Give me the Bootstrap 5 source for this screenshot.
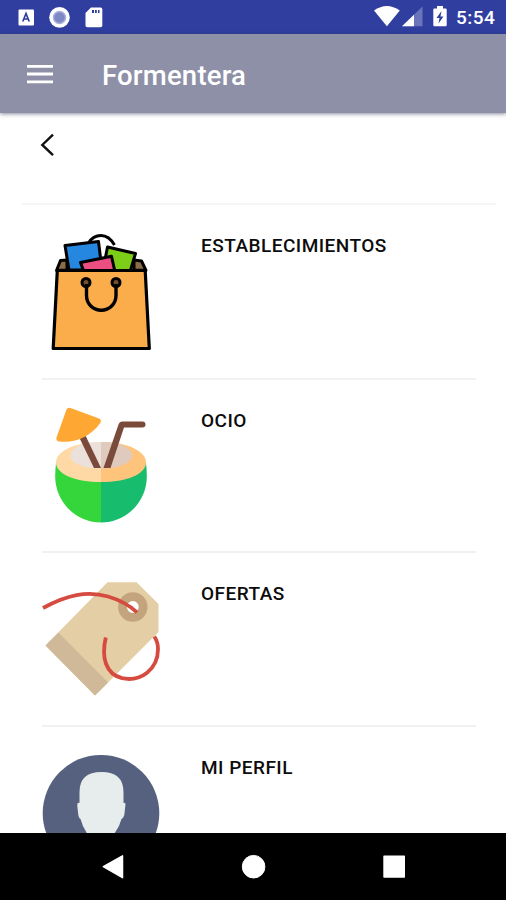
<!DOCTYPE html>
<html lang="es">
<head>
<meta charset="utf-8">
<meta name="viewport" content="width=device-width, initial-scale=1">
<title>Formentera</title>
<link href="https://cdn.jsdelivr.net/npm/bootstrap@5.3.0/dist/css/bootstrap.min.css" rel="stylesheet">
<style>
body{font-family:Roboto,sans-serif;color:#111}
svg{display:block;flex:none}
.screen{height:900px;width:506px}
.status-bar{height:34px;background:#303f9f;padding:0 10px 0 18px}
.clock{font-size:19px;font-weight:500;line-height:34px;padding-top:2px;width:40px;letter-spacing:.5px}
.app-bar{height:79px;background:#8e90a7;box-shadow:0 1px 4px rgba(40,42,80,.55);padding:0 27px;z-index:1}
.app-title{font-size:27.500px;font-weight:500;line-height:32px;margin:4px 0 0 49px;letter-spacing:.2px}
.back-row{height:92px;margin:0 10px 0 22px;padding:20px 0 0 18px;border-bottom:2px solid #f5f5f5}
.menu-list{margin:0 30px 0 42px}
.menu-entry{height:173px;border-bottom:2px solid #f1f1f1}
.menu-entry.first{height:175px}
.menu-entry.third{height:174px}
.menu-entry svg{margin-left:-2px}
.entry-label{font-size:19px;font-weight:500;line-height:24px;margin:29px 0 0 39px;color:#0c0c0c;letter-spacing:.48px}
.nav-keys{height:67px;background:#000;z-index:1}
</style>
</head>
<body class="bg-white">
<div class="screen d-flex flex-column overflow-hidden bg-white">
  <div class="status-bar d-flex align-items-center justify-content-between text-white flex-shrink-0">
    <svg width="90" height="34" viewBox="18 0 90 34">
      <rect x="18.500" y="9.500" width="15.500" height="16" rx="1" fill="#fff"/>
      <path d="M22.800 21.500L26 13.500l3.200 8M24 19h4" fill="none" stroke="#303f9f" stroke-width="1.700"/>
      <circle cx="59.500" cy="17.400" r="10.300" fill="#fff"/>
      <circle cx="59.500" cy="17.400" r="6" fill="#7d88c5" stroke="#a9b1dc" stroke-width="1.500"/>
      <path d="M91 7.500h9.500q1.800 0 1.800 1.800v16.200q0 1.800-1.800 1.800H87.300q-1.800 0-1.800-1.800V13z" fill="#fff"/>
      <path d="M92 10h2v3h-2zM95 10h1.800v3H95zM98 10h1.500v3H98z" fill="#303f9f"/>
    </svg>
    <div class="d-flex">
      <svg width="82" height="34" viewBox="374 0 82 34">
        <path d="M374 11.500Q386.800 2.500 399.800 11.500L386.900 27.300z" fill="#fff"/>
        <path d="M402 27.300L422.500 7.500v19.800z" fill="#6974bb"/>
        <path d="M402 27.300L414 15.700v11.600z" fill="#fff"/>
        <path d="M437 7h6v2.500h2.500q1.200 0 1.200 1.200V26q0 1.300-1.200 1.300h-11q-1.200 0-1.200-1.300V10.700q0-1.200 1.200-1.200h2.500z" fill="#fff"/>
        <path d="M441.500 12l-5 7h3l-1 5.500 5-7h-3z" fill="#303f9f"/>
      </svg>
      <span class="clock">5:54</span>
    </div>
  </div>
  <header class="app-bar position-relative d-flex align-items-center text-white flex-shrink-0">
    <svg width="26" height="22" viewBox="27 62 26 22"><path d="M27 65.300h26M27 73h26M27 80.800h26" stroke="#fff" stroke-width="2.800"/></svg>
    <h1 class="app-title">Formentera</h1>
  </header>
  <main class="flex-grow-1 overflow-hidden">
    <div class="back-row">
      <svg width="16" height="24" viewBox="40 133 16 24"><path d="M53 134.700L42.300 144.900 53 155.200" fill="none" stroke="#111" stroke-width="2.400"/></svg>
    </div>
    <div class="menu-list">
      <div class="menu-entry first d-flex">
        <svg width="122" height="173" viewBox="40 205 122 173">
          <path d="M88.500 243Q93 235.500 101 235.500T114.500 245" fill="none" stroke="#000" stroke-width="3"/>
          <g stroke="#000" stroke-width="3" stroke-linejoin="round">
            <path d="M56.500 270.500L60.500 260.500 67 260V270zM146 270.500L141.500 261 134 260V270z" fill="#8b6c47"/>
            <path d="M65 245.500L98.500 241.500 102 270H69z" fill="#2587df"/>
            <path d="M107.500 247L135.500 253.500 130 272 103 270z" fill="#7cce18"/>
            <path d="M80.500 262.500L111.500 256.200 115 272H84z" fill="#eb4f82"/>
            <path d="M57.300 270.500H145.200L149.300 348.500H53.200z" fill="#fbad4c" stroke-width="3.200"/>
          </g>
          <g fill="#71502d" stroke="#000" stroke-width="3"><circle cx="86" cy="282.500" r="4"/><circle cx="116" cy="282.500" r="4"/></g>
          <path d="M86.500 284V295.500A14.700 14.700 0 0 0 116 295.500V284" fill="none" stroke="#000" stroke-width="3.400"/>
        </svg>
        <div class="entry-label">ESTABLECIMIENTOS</div>
      </div>
      <div class="menu-entry d-flex">
        <svg width="122" height="171" viewBox="40 380 122 171">
          <path d="M56 463Q55.200 470 55.200 476.500A45.800 46 0 0 0 101 522.500V463z" fill="#35d63b"/>
          <path d="M146 463Q146.800 470 146.800 476.500A45.800 46 0 0 1 101 522.500V463z" fill="#17bd6c"/>
          <path d="M101 442C75 442 56 451 56 462.500 56 474.500 76 482 101 482z" fill="#fed9a6"/>
          <path d="M101 442C127 442 146 451 146 462.500 146 474.500 126 482 101 482z" fill="#fec47b"/>
          <path d="M101 442C83 442 70.500 448 70.500 455.500S83 468.500 101 468.500z" fill="#ebe1da"/>
          <path d="M101 442C119 442 132 448 132 455.500S119 468.500 101 468.500z" fill="#dfcabd"/>
          <path d="M79 437L85 434.500 101 468H94z" fill="#7a4a3b"/>
          <path d="M103.500 468L118.500 424.500Q119.500 421.500 122.500 421.500H142.500a3 3 0 0 1 0 6H124L110.500 468z" fill="#7a4a3b"/>
          <path d="M66.500 409.500Q67.700 407 70.500 408L99 418.500Q102.200 420 100.200 423C91 436 76 443.500 59 441.500Q55.800 441 56.500 437.500z" fill="#ffa733"/>
        </svg>
        <div class="entry-label">OCIO</div>
      </div>
      <div class="menu-entry third d-flex">
        <svg width="122" height="172" viewBox="40 553 122 172">
          <path d="M107.500 582.300H136.500L158.500 604V632L95 695.500 45.500 645.500z" fill="#e4cea5"/>
          <path d="M58.500 632.500L108 682.500 95 695.500 45.500 645.500z" fill="#cfb998"/>
          <circle cx="132.800" cy="607" r="10.300" fill="#fff" stroke="#c3a47c" stroke-width="8.800"/>
          <path d="M43 608C67 595 87 590.500 108 596.500 120 600 129 605 137 612.300" fill="none" stroke="#d64b3f" stroke-width="3.800"/>
          <path d="M105.800 637.500C101 658 106 674 122 678.200 140 682 158 670 158 649Q158 642 154.300 636.500" fill="none" stroke="#d64b3f" stroke-width="3.800"/>
        </svg>
        <div class="entry-label">OFERTAS</div>
      </div>
      <div class="menu-entry d-flex">
        <svg width="122" height="171" viewBox="40 727 122 171">
          <circle cx="101" cy="813.200" r="58.300" fill="#56617f"/>
          <path d="M79.500 803V792Q79.500 772 101.500 772T123.500 792V803Q126 802 125.300 806L124.300 815Q123.500 818 121.500 819 119.500 827 114 834V852H87.500V834Q82.500 827 80.500 819 78.800 818 78.300 815L77.300 806Q77 802 79.500 803z" fill="#e7eced"/>
        </svg>
        <div class="entry-label">MI PERFIL</div>
      </div>
    </div>
  </main>
  <nav class="nav-keys d-flex flex-shrink-0">
    <svg width="506" height="67" viewBox="0 833 506 67" fill="#fff" stroke="#fff" stroke-linejoin="round">
      <path d="M103.300 866.700L122.500 855.800V877.700z" stroke-width="1.500"/>
      <circle cx="253.600" cy="866.700" r="11.300" stroke-width="1"/>
      <rect x="384" y="856.300" width="20.300" height="20.700" stroke-width="1.400"/>
    </svg>
  </nav>
</div>
<script src="https://cdn.jsdelivr.net/npm/bootstrap@5.3.0/dist/js/bootstrap.bundle.min.js"></script>
</body>
</html>
